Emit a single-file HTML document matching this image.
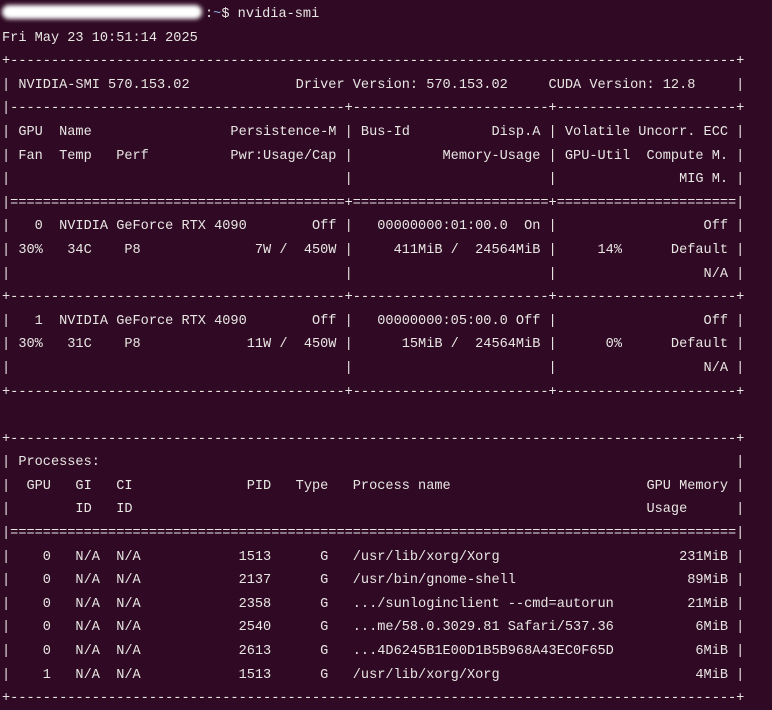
<!DOCTYPE html>
<html><head><meta charset="utf-8"><style>
html,body{margin:0;padding:0;background:#300a24;width:772px;height:710px;overflow:hidden}
pre{margin:0;padding:3px 0 0 2px;font-family:"Liberation Mono",monospace;font-size:13.6px;line-height:23.6px;color:#e8e6e3;white-space:pre}
.blob{display:inline-block;width:200px;height:14px;background:#fff;border-radius:7px;filter:blur(2px);vertical-align:-2px;margin-right:3px}
.b{color:#8aa6d8}
</style></head><body><pre><span class="blob"></span>:<span class="b">~</span>$ nvidia-smi
Fri May 23 10:51:14 2025
+-----------------------------------------------------------------------------------------+
| NVIDIA-SMI 570.153.02             Driver Version: 570.153.02     CUDA Version: 12.8     |
|-----------------------------------------+------------------------+----------------------+
| GPU  Name                 Persistence-M | Bus-Id          Disp.A | Volatile Uncorr. ECC |
| Fan  Temp   Perf          Pwr:Usage/Cap |           Memory-Usage | GPU-Util  Compute M. |
|                                         |                        |               MIG M. |
|=========================================+========================+======================|
|   0  NVIDIA GeForce RTX 4090        Off |   00000000:01:00.0  On |                  Off |
| 30%   34C    P8              7W /  450W |     411MiB /  24564MiB |     14%      Default |
|                                         |                        |                  N/A |
+-----------------------------------------+------------------------+----------------------+
|   1  NVIDIA GeForce RTX 4090        Off |   00000000:05:00.0 Off |                  Off |
| 30%   31C    P8             11W /  450W |      15MiB /  24564MiB |      0%      Default |
|                                         |                        |                  N/A |
+-----------------------------------------+------------------------+----------------------+

+-----------------------------------------------------------------------------------------+
| Processes:                                                                              |
|  GPU   GI   CI              PID   Type   Process name                        GPU Memory |
|        ID   ID                                                               Usage      |
|=========================================================================================|
|    0   N/A  N/A            1513      G   /usr/lib/xorg/Xorg                      231MiB |
|    0   N/A  N/A            2137      G   /usr/bin/gnome-shell                     89MiB |
|    0   N/A  N/A            2358      G   .../sunloginclient --cmd=autorun         21MiB |
|    0   N/A  N/A            2540      G   ...me/58.0.3029.81 Safari/537.36          6MiB |
|    0   N/A  N/A            2613      G   ...4D6245B1E00D1B5B968A43EC0F65D          6MiB |
|    1   N/A  N/A            1513      G   /usr/lib/xorg/Xorg                        4MiB |
+-----------------------------------------------------------------------------------------+
</pre></body></html>
